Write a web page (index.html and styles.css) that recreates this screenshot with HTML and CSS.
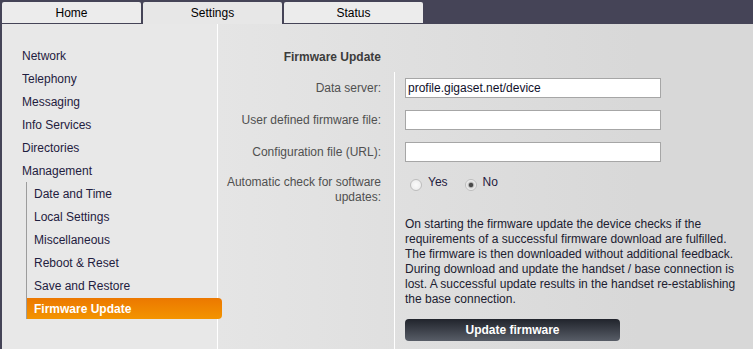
FILE: index.html
```html
<!DOCTYPE html>
<html lang="en">
<head>
<meta charset="utf-8">
<title>Firmware Update</title>
<link rel="stylesheet" href="styles.css">
</head>
<body>
<div class="app">
  <nav class="tabs">
    <div class="tab">Home</div>
    <div class="tab active">Settings</div>
    <div class="tab">Status</div>
  </nav>
  <div class="main">
    <aside class="side">
      <ul class="menu">
        <li><div class="item">Network</div></li>
        <li><div class="item">Telephony</div></li>
        <li><div class="item">Messaging</div></li>
        <li><div class="item">Info Services</div></li>
        <li><div class="item">Directories</div></li>
        <li><div class="item">Management</div>
          <ul class="sub">
            <li>Date and Time</li>
            <li>Local Settings</li>
            <li>Miscellaneous</li>
            <li>Reboot &amp; Reset</li>
            <li>Save and Restore</li>
            <li class="active">Firmware Update</li>
          </ul>
        </li>
      </ul>
    </aside>
    <section class="content">
      <div class="row head">
        <h2 class="title">Firmware Update</h2>
      </div>
      <div class="form">
        <div class="row input-row">
          <label class="label" for="srv">Data server:</label>
          <div class="field"><input id="srv" class="text" type="text" value="profile.gigaset.net/device"></div>
        </div>
        <div class="row input-row">
          <label class="label" for="fw">User defined firmware file:</label>
          <div class="field"><input id="fw" class="text" type="text" value=""></div>
        </div>
        <div class="row input-row">
          <label class="label" for="cfg">Configuration file (URL):</label>
          <div class="field"><input id="cfg" class="text" type="text" value=""></div>
        </div>
        <div class="row check-row">
          <div class="label multi">Automatic check for software updates:</div>
          <div class="field">
            <div class="radios">
              <label class="opt"><input class="radio" type="radio" name="auto"><span>Yes</span></label>
              <label class="opt"><input class="radio" type="radio" name="auto" checked><span>No</span></label>
            </div>
          </div>
        </div>
        <div class="row last-row">
          <div class="label"></div>
          <div class="field">
            <p class="note">On starting the firmware update the device checks if the requirements of a successful firmware download are fulfilled. The firmware is then downloaded without additional feedback. During download and update the handset / base connection is lost. A successful update results in the handset re-establishing the base connection.</p>
            <button class="btn" type="button">Update firmware</button>
          </div>
        </div>
      </div>
    </section>
  </div>
</div>
</body>
</html>
```
FILE: styles.css
```css
html, body {
  margin: 0;
  padding: 0;
}
body {
  background: #454457;
  font-family: "Liberation Sans", Arial, sans-serif;
  font-size: 12px;
}
.app {
  padding-left: 2px;
  height: 349px;
  display: flex;
  flex-direction: column;
  box-sizing: border-box;
  overflow: hidden;
}
.tabs {
  display: flex;
  gap: 2px;
  padding-top: 2px;
  height: 22px;
  align-items: flex-start;
}
.tab {
  width: 139px;
  height: 21px;
  line-height: 23px;
  text-align: center;
  background: #ececec;
  color: #000;
  border-radius: 2px 2px 0 0;
  overflow: hidden;
}
.tab.active {
  height: 22px;
  background: #e7e7e7;
}
.main {
  display: flex;
  flex: 1;
  min-height: 0;
}
.side {
  width: 215px;
  flex: none;
  background: #e8e8e8;
  padding-top: 20px;
  box-sizing: border-box;
}
.menu {
  list-style: none;
  margin: 0;
  padding: 0 0 0 20px;
}
.item {
  height: 23px;
  line-height: 25px;
  color: #1f2040;
  overflow: hidden;
}
.sub {
  list-style: none;
  margin: 0 0 0 4px;
  padding: 0;
  border-left: 1px solid #9c9c9c;
}
.sub li {
  width: 195px;
  box-sizing: border-box;
  padding-left: 7px;
  height: 23px;
  line-height: 25px;
  color: #1f2040;
  overflow: hidden;
}
.sub li.active {
  height: 21px;
  line-height: 23px;
  margin: 1px 0;
  background: linear-gradient(#ec7800, #f39400);
  color: #fff;
  font-weight: bold;
  border-radius: 0 4px 4px 0;
  position: relative;
  z-index: 1;
}
.content {
  flex: 1;
  display: flex;
  flex-direction: column;
  background: linear-gradient(to right, #e5e5e5 0, #d8d8d8 420px);
  border-left: 1px solid #fff;
  padding-top: 25px;
}
.row {
  display: grid;
  grid-template-columns: 176px 1fr;
}
.title {
  grid-column: 1;
  margin: 0 0 7px;
  font-size: 12px;
  line-height: 16px;
  font-weight: bold;
  color: #3c3c3c;
  text-align: right;
  padding-right: 13px;
}
.form {
  flex: 1;
  display: flex;
  flex-direction: column;
}
.label {
  text-align: right;
  padding-right: 13px;
  color: #505050;
}
.field {
  border-left: 1px solid #fff;
  padding-left: 10px;
}
.input-row {
  height: 32px;
}
.input-row .label,
.input-row .field {
  display: flex;
  align-items: center;
}
.input-row .label {
  justify-content: flex-end;
}
.text {
  width: 256px;
  height: 20px;
  box-sizing: border-box;
  border: 1px solid #a6a6a6;
  background: #fff;
  padding: 0 2px;
  margin: 0;
  font-family: "Liberation Sans", Arial, sans-serif;
  font-size: 12px;
  color: #10102a;
  outline: none;
}
.check-row .label {
  padding-top: 7px;
  padding-bottom: 3px;
  line-height: 15px;
}
.radios {
  display: flex;
  padding-top: 7px;
  line-height: 15px;
}
.opt {
  display: flex;
  align-items: flex-start;
  color: #1f2040;
}
.opt + .opt {
  margin-left: 17px;
}
.radio {
  appearance: none;
  -webkit-appearance: none;
  width: 12px;
  height: 12px;
  margin: 4px 6px 0 5px;
  border: 1px solid #bdbdbd;
  border-radius: 50%;
  background: radial-gradient(circle, #fbfbfb 0, #ececec 6px);
  box-sizing: border-box;
}
.opt + .opt .radio {
  margin-left: 0;
}
.radio:checked {
  background: radial-gradient(circle, #4a4a4a 0, #4a4a4a 1.8px, #b9b9b9 2.6px, #dcdcdc 3.4px, #f4f4f4 5px);
}
.last-row {
  flex: 1;
}
.note {
  margin: 9px 0 0;
  width: 336px;
  line-height: 15px;
  color: #202030;
}
.btn {
  display: block;
  margin-top: 12px;
  width: 215px;
  height: 22px;
  border: 0;
  border-radius: 4px;
  background: linear-gradient(#21242c, #585d67);
  color: #fff;
  font-family: "Liberation Sans", Arial, sans-serif;
  font-size: 12px;
  font-weight: bold;
  padding: 0;
}
```
